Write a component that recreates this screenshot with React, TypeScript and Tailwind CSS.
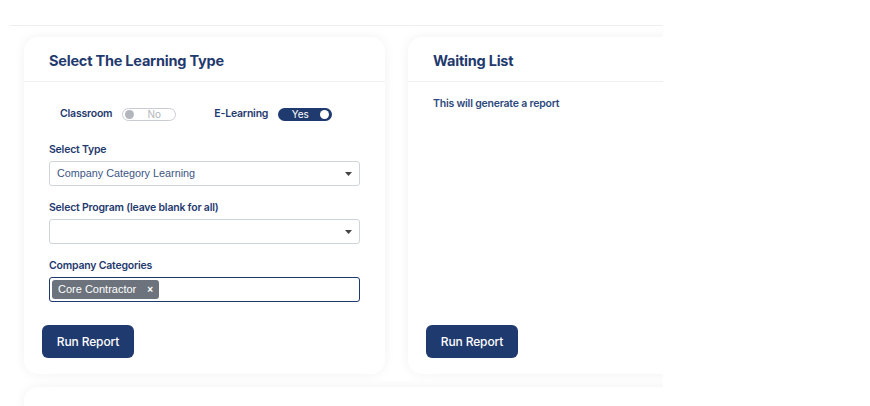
import React from 'react';

const navy = 'text-[#1f3a6e]';
const labelText = `text-[10.5px] font-semibold tracking-[-0.02em] ${navy}`;

function Toggle({ on }: { on: boolean }) {
  if (on) {
    return (
      <div className="relative flex h-[13px] w-[54px] items-center rounded-full bg-[#1f3a6e]">
        <span className="flex-1 pr-[10px] text-center text-[10px] leading-none text-white">Yes</span>
        <span className="absolute right-[3px] top-[2px] h-[9px] w-[9px] rounded-full bg-white" />
      </div>
    );
  }
  return (
    <div className="relative flex h-[13px] w-[54px] items-center rounded-full border border-[#c9ccd2] bg-white">
      <span className="absolute left-[2px] top-[1px] h-[9px] w-[9px] rounded-full bg-[#b3b7bd]" />
      <span className="flex-1 pl-[10px] text-center text-[10px] leading-none text-[#b3b7bd]">No</span>
    </div>
  );
}

function Caret() {
  return (
    <svg width="7" height="4" viewBox="0 0 7 4" className="shrink-0">
      <path d="M0 0h7L3.5 4z" fill="#444" />
    </svg>
  );
}

function Field({ label, children }: { label: string; children: React.ReactNode }) {
  return (
    <div className="flex flex-col gap-[3px]">
      <label className={`leading-[16px] ${labelText}`}>{label}</label>
      {children}
    </div>
  );
}

function Select({ value }: { value?: string }) {
  return (
    <div className="flex h-[25px] items-center rounded-[3px] border border-[#cfd4da] bg-white pl-[7px] pr-[7px]">
      <span className="flex-1 truncate font-['Liberation_Sans',sans-serif] text-[10.8px] text-[#3d5585]">{value}</span>
      <Caret />
    </div>
  );
}

function RunButton() {
  return (
    <button className="ml-[-7px] h-[33px] w-[92px] rounded-[6px] bg-[#1f3a6e] text-[12px] font-medium tracking-[-0.01em] text-white">
      Run Report
    </button>
  );
}

function Card({ title, children }: { title: string; children: React.ReactNode }) {
  return (
    <div className="flex h-[337px] w-[361px] shrink-0 flex-col rounded-[14px] bg-white shadow-[0_0_12px_rgba(0,0,0,0.06)]">
      <div className="flex h-[45px] shrink-0 items-center border-b border-[#efefef] px-[25px] pt-[3px]">
        <h2 className={`text-[14.5px] font-bold tracking-[-0.015em] ${navy}`}>{title}</h2>
      </div>
      {children}
    </div>
  );
}

export default function App() {
  return (
    <div className="h-[406px] w-[870px] overflow-hidden bg-white font-['Inter',sans-serif]">
      <div className="ml-[10px] mt-[25px] w-[653px] overflow-hidden border-t border-[#eeeeee]">
        <div className="flex gap-[23px] pl-[14px] pr-[10px] pt-[11px]">
          <Card title="Select The Learning Type">
            <div className="flex flex-1 flex-col px-[25px] pb-[16px] pt-[24px]">
              <div className="flex h-[16px] items-center pl-[11px]">
                <span className={`mr-[10px] ${labelText}`}>Classroom</span>
                <Toggle on={false} />
                <span className={`ml-[38px] mr-[10px] ${labelText}`}>E-Learning</span>
                <Toggle on />
              </div>
              <div className="mt-[20px] flex flex-col gap-[14px]">
                <Field label="Select Type">
                  <Select value="Company Category Learning" />
                </Field>
                <Field label="Select Program (leave blank for all)">
                  <Select />
                </Field>
                <Field label="Company Categories">
                  <div className="flex h-[25px] items-center rounded-[3px] border border-[#1f3a6e] bg-white pl-[2px]">
                    <span className="flex h-[19px] items-center gap-[11px] rounded-[3px] bg-[#6c737c] pl-[6px] pr-[6px] font-['Liberation_Sans',sans-serif] text-[11px] text-white">
                      Core Contractor
                      <span className="text-[10px] font-bold">×</span>
                    </span>
                  </div>
                </Field>
              </div>
              <div className="mt-auto">
                <RunButton />
              </div>
            </div>
          </Card>
          <Card title="Waiting List">
            <div className="flex flex-1 flex-col px-[25px] pb-[16px] pt-[14px]">
              <p className="text-[10.5px] font-semibold tracking-[-0.02em] text-[#2d4a7c]">This will generate a report</p>
              <div className="mt-auto">
                <RunButton />
              </div>
            </div>
          </Card>
        </div>
        <div className="h-[40px] pl-[14px] pt-[13px]">
          <div className="h-[40px] w-[700px] rounded-[14px] bg-white shadow-[0_0_12px_rgba(0,0,0,0.06)]" />
        </div>
      </div>
    </div>
  );
}
